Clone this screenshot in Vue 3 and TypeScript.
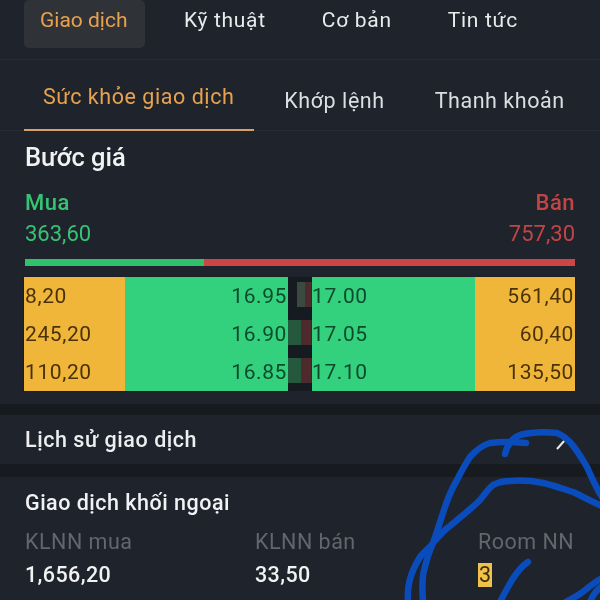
<script setup lang="ts">
const mainTabs = ['Giao dịch', 'Kỹ thuật', 'Cơ bản', 'Tin tức']
const subTabs = ['Sức khỏe giao dịch', 'Khớp lệnh', 'Thanh khoản']

const rows = [
  { buyVol: '8,20', buyPrice: '16.95', sellPrice: '17.00', sellVol: '561,40', up: 8, down: 7, muted: true },
  { buyVol: '245,20', buyPrice: '16.90', sellPrice: '17.05', sellVol: '60,40', up: 13, down: 11, muted: false },
  { buyVol: '110,20', buyPrice: '16.85', sellPrice: '17.10', sellVol: '135,50', up: 13, down: 11, muted: false },
]

const foreign = [
  { label: 'KLNN mua', value: '1,656,20' },
  { label: 'KLNN bán', value: '33,50' },
]
</script>

<template>
  <div class="screen">
    <nav class="main-tabs">
      <div v-for="(tab, i) in mainTabs" :key="tab" class="main-tab" :class="{ active: i === 0 }">{{ tab }}</div>
    </nav>

    <nav class="sub-tabs">
      <div v-for="(tab, i) in subTabs" :key="tab" class="sub-tab" :class="{ active: i === 0 }">{{ tab }}</div>
    </nav>

    <section class="steps">
      <h2 class="title">Bước giá</h2>
      <div class="totals">
        <div class="buy">
          <div class="side">Mua</div>
          <div class="total">363,60</div>
        </div>
        <div class="sell">
          <div class="side">Bán</div>
          <div class="total">757,30</div>
        </div>
      </div>
      <div class="ratio">
        <div class="ratio-buy"></div>
        <div class="ratio-sell"></div>
      </div>

      <div class="book">
        <div class="book-side">
          <div class="vol-col">
            <span v-for="r in rows" :key="r.buyPrice">{{ r.buyVol }}</span>
          </div>
          <div class="price-col right">
            <span v-for="r in rows" :key="r.buyPrice">{{ r.buyPrice }}</span>
          </div>
        </div>

        <div class="mid">
          <div v-for="r in rows" :key="r.buyPrice" class="mid-row">
            <i class="mid-up" :class="{ muted: r.muted }" :style="{ width: r.up + 'px' }"></i>
            <i class="mid-down" :style="{ width: r.down + 'px' }"></i>
          </div>
        </div>

        <div class="book-side">
          <div class="price-col">
            <span v-for="r in rows" :key="r.sellPrice">{{ r.sellPrice }}</span>
          </div>
          <div class="vol-col right">
            <span v-for="r in rows" :key="r.sellPrice">{{ r.sellVol }}</span>
          </div>
        </div>
      </div>
    </section>

    <section class="history">
      <span>Lịch sử giao dịch</span>
      <svg class="chevron" width="10" height="20" viewBox="0 0 10 20">
        <path d="M1 1 L9 10 L1 19" fill="none" stroke="#e8eaec" stroke-width="2" />
      </svg>
    </section>

    <section class="foreign">
      <h2 class="title small">Giao dịch khối ngoại</h2>
      <div class="foreign-grid">
        <div v-for="f in foreign" :key="f.label">
          <div class="f-label">{{ f.label }}</div>
          <div class="f-value">{{ f.value }}</div>
        </div>
        <div class="room">
          <div class="f-label">Room NN</div>
          <div class="f-value"><mark>3</mark></div>
        </div>
      </div>
    </section>

    <!-- net ve tay mau xanh de len man hinh -->
    <svg class="scribble" width="600" height="600" viewBox="0 0 600 600">
      <g fill="none" stroke="#0b4cbc" stroke-width="6.5" stroke-linecap="round" stroke-linejoin="round">
        <path d="M408 602 C407 588 409 575 420 557 C425 550 430 548 433 543 C437 532 440 522 443 513 C447 500 451 490 457 480 C462 470 466 463 470 457 C477 449 483 445 490 443 C503 441 516 442 526 443" />
        <path d="M505 454 C507 446 512 438 520 435 C532 432 546 432 557 433 C570 438 578 452 587 467 C592 478 596 488 602 497" />
        <path d="M423 602 C422 588 422 575 425 567 C427 558 430 550 433 543 C438 537 441 534 445 530 C457 520 470 510 480 500 C485 494 488 489 493 485 C499 482 504 481 510 481 C522 480 533 481 543 483 C553 485 563 489 573 492 C582 496 592 502 602 506" />
        <path d="M528 562 C522 566 517 572 512 580 C508 587 504 594 500 602" />
        <path d="M566 602 C572 598 578 596 584 591 C590 586 595 582 602 578" />
        <path d="M590 602 C592 597 596 590 602 586" />
      </g>
    </svg>
  </div>
</template>

<style scoped>
.screen {
  position: relative;
  width: 600px;
  height: 600px;
  overflow: hidden;
  background: #1f232b;
  color: #e8eaec;
  font-family: Roboto, "Noto Sans", sans-serif;
  filter: blur(0.5px);
}

.main-tabs {
  display: flex;
  height: 60px;
  padding-left: 24px;
  border-bottom: 1px solid #272b32;
  box-sizing: border-box;
}
.main-tab {
  height: 48px;
  padding-top: 8px;
  margin-right: 56px;
  box-sizing: border-box;
  font-size: 21px;
  line-height: 24px;
  letter-spacing: 0.7px;
}
.main-tab.active {
  width: 121px;
  padding-left: 16px;
  margin-right: 39px;
  letter-spacing: 0;
  color: #e8a24f;
  background: #2f3337;
  border-radius: 5px;
}

.sub-tabs {
  display: flex;
  height: 71px;
  padding-left: 24px;
  border-bottom: 1px solid #272b32;
  box-sizing: border-box;
}
.sub-tab {
  flex: none;
  height: 71px;
  padding-top: 29px;
  margin-right: 50px;
  box-sizing: border-box;
  font-size: 21.5px;
  line-height: 24px;
  letter-spacing: 0.55px;
  white-space: nowrap;
  color: #dcdfe2;
}
.sub-tab.active {
  padding: 25px 20px 0 19px;
  margin-right: 30px;
  color: #e8a24f;
  border-bottom: 2px solid #d9a066;
}

.steps {
  height: 273px;
  padding: 12px 25px 0;
  box-sizing: border-box;
}
.title {
  margin: 0;
  font-size: 25.5px;
  line-height: 28px;
  font-weight: 500;
  color: #f1f2f3;
}
.title.small {
  font-size: 21.5px;
  letter-spacing: 0.5px;
}

.totals {
  display: flex;
  justify-content: space-between;
  margin-top: 19px;
}
.side {
  font-size: 22px;
  line-height: 26px;
  font-weight: 500;
  letter-spacing: 0.5px;
}
.total {
  font-size: 22px;
  line-height: 26px;
  margin-top: 5px;
}
.buy {
  color: #35c474;
}
.sell {
  text-align: right;
  color: #c24545;
}

.ratio {
  display: flex;
  height: 7px;
  margin-top: 12px;
}
.ratio-buy {
  width: 179px;
  background: #2fc16c;
}
.ratio-sell {
  flex: 1;
  background: #cc4646;
}

.book {
  display: grid;
  grid-template-columns: 264px 24px 263px;
  margin: 11px 0 0 -1px;
  height: 113px;
  font-size: 21px;
  letter-spacing: 0.6px;
  color: #0d4a2c;
}
.book-side {
  display: flex;
  background: #33d17e;
  box-shadow: 0 0 1px #111;
}
.book-side:last-child {
  justify-content: space-between;
}
.vol-col,
.price-col {
  display: flex;
  flex-direction: column;
  padding: 0 1px;
  line-height: 38px;
  box-sizing: border-box;
}
.vol-col {
  width: 101px;
  flex: none;
  background: #f0b63a;
  color: #4a3208;
}
.book-side:last-child .vol-col {
  width: 100px;
}
.price-col {
  flex: 1;
}
.book-side:last-child .price-col {
  padding-left: 0;
}
.right {
  text-align: right;
}
.mid {
  display: flex;
  flex-direction: column;
  gap: 13px;
  padding: 5px 0 6px;
  background: #161a21;
}
.mid-row {
  display: flex;
  justify-content: flex-end;
  height: 25px;
}
.mid-up {
  background: #24593d;
}
.mid-up.muted {
  background: #3a4a40;
}
.mid-down {
  background: #4e2a2c;
}

.history {
  display: flex;
  align-items: center;
  height: 49px;
  padding: 0 34px 0 25px;
  font-size: 21.5px;
  font-weight: 500;
  letter-spacing: 0.55px;
  color: #eceef0;
  border-top: 11px solid #171b1f;
  border-bottom: 13px solid #171b1f;
}
.chevron {
  margin-left: auto;
}

.foreign {
  padding: 12px 25px 0;
}
.foreign-grid {
  display: grid;
  grid-template-columns: 230px 223px 1fr;
  margin-top: 12px;
}
.f-label {
  font-size: 21.5px;
  line-height: 26px;
  letter-spacing: 0.5px;
  color: #62666d;
}
.f-value {
  margin-top: 7px;
  font-size: 21.5px;
  line-height: 26px;
  letter-spacing: 0.4px;
  font-weight: 500;
  color: #f1f2f3;
}
.room .f-value {
  font-weight: 400;
}
mark {
  display: inline-block;
  width: 14px;
  height: 24px;
  line-height: 24px;
  text-align: center;
  letter-spacing: 0;
  background: #f0c24a;
  color: #3a2d0a;
}

.scribble {
  position: absolute;
  inset: 0;
  pointer-events: none;
}
</style>
